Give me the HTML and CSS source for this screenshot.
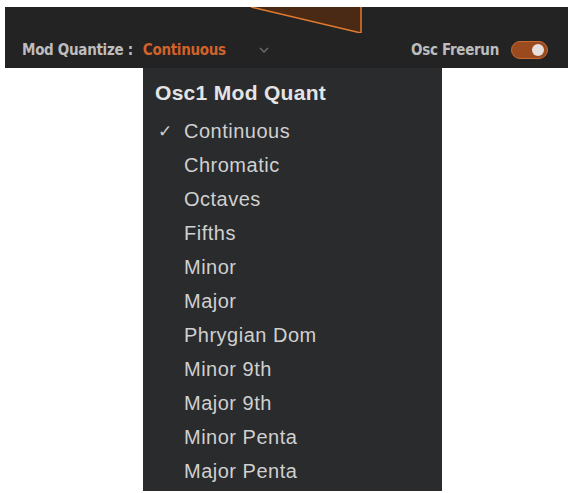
FILE: index.html
```html
<!DOCTYPE html>
<html lang="en">
<head>
    <meta charset="UTF-8">
    <meta name="viewport" content="width=device-width, initial-scale=1.0">
    <title>Osc1 Mod Quant</title>
    <link rel="stylesheet" href="styles.css">
</head>
<body>
    <div class="panel">
        <svg class="graph" width="563" height="26" viewBox="0 0 563 26">
            <polygon points="246,0 356,26 356,0" fill="#4a2a14"/>
            <polyline points="246,0 356,26 356,0" fill="none" stroke="#e07a30" stroke-width="1.5"/>
        </svg>
        <div class="controls">
            <span class="label">Mod Quantize :</span>
            <span class="value">Continuous</span>
            <svg class="chevron" width="12" height="8" viewBox="0 0 12 8">
                <polyline points="2,2 6,6 10,2" fill="none" stroke="#6a6a6a" stroke-width="1.5"/>
            </svg>
            <span class="spacer"></span>
            <span class="label">Osc Freerun</span>
            <span class="toggle"><span class="knob"></span></span>
        </div>
    </div>

    <div class="menu">
        <div class="menu-title">Osc1 Mod Quant</div>
        <ul class="items">
            <li class="item checked"><span class="check">&#10003;</span>Continuous</li>
            <li class="item"><span class="check"></span>Chromatic</li>
            <li class="item"><span class="check"></span>Octaves</li>
            <li class="item"><span class="check"></span>Fifths</li>
            <li class="item"><span class="check"></span>Minor</li>
            <li class="item"><span class="check"></span>Major</li>
            <li class="item"><span class="check"></span>Phrygian Dom</li>
            <li class="item"><span class="check"></span>Minor 9th</li>
            <li class="item"><span class="check"></span>Major 9th</li>
            <li class="item"><span class="check"></span>Minor Penta</li>
            <li class="item"><span class="check"></span>Major Penta</li>
        </ul>
    </div>
</body>
</html>
```

FILE: styles.css
```css
body {
    margin: 0;
    padding: 0;
    background-color: #fff;
    font-family: "Liberation Sans", Arial, sans-serif;
}
.panel {
    margin: 7px 5px 0 5px;
    height: 61px;
    background-color: #232324;
    display: flex;
    flex-direction: column;
}
.graph {
    display: block;
}
.controls {
    display: flex;
    align-items: center;
    height: 34px;
    padding: 0 20px 0 17px;
    font-family: "DejaVu Sans Condensed", "DejaVu Sans", sans-serif;
    font-size: 15px;
    font-weight: bold;
    letter-spacing: -0.3px;
}
.label {
    color: #bdbdbd;
}
.value {
    color: #d2622a;
    margin-left: 10px;
}
.chevron {
    margin-left: 32px;
}
.spacer {
    flex: 1;
}
.toggle {
    margin-left: 12px;
    width: 37px;
    height: 18px;
    border-radius: 9px;
    background-color: #9a4a1e;
    border: 1px solid #c86a30;
    display: flex;
    align-items: center;
    justify-content: flex-end;
    box-sizing: border-box;
    padding-right: 3px;
}
.knob {
    width: 12px;
    height: 12px;
    border-radius: 50%;
    background-color: #e6e0dc;
}
.menu {
    margin-left: 143px;
    width: 299px;
    background-color: #2a2b2d;
    padding: 8px 0 3px 0;
    color: #d0d0d0;
}
.menu-title {
    font-size: 21px;
    font-weight: bold;
    letter-spacing: 0.3px;
    line-height: 34px;
    padding-left: 12px;
    margin-bottom: 4px;
    color: #e4e4e4;
}
.items {
    list-style: none;
    margin: 0;
    padding: 0;
}
.item {
    display: flex;
    align-items: center;
    height: 34px;
    font-size: 20px;
    letter-spacing: 0.5px;
    padding-left: 15px;
}
.check {
    width: 26px;
    font-size: 17px;
    font-family: "DejaVu Sans", sans-serif;
}
```
